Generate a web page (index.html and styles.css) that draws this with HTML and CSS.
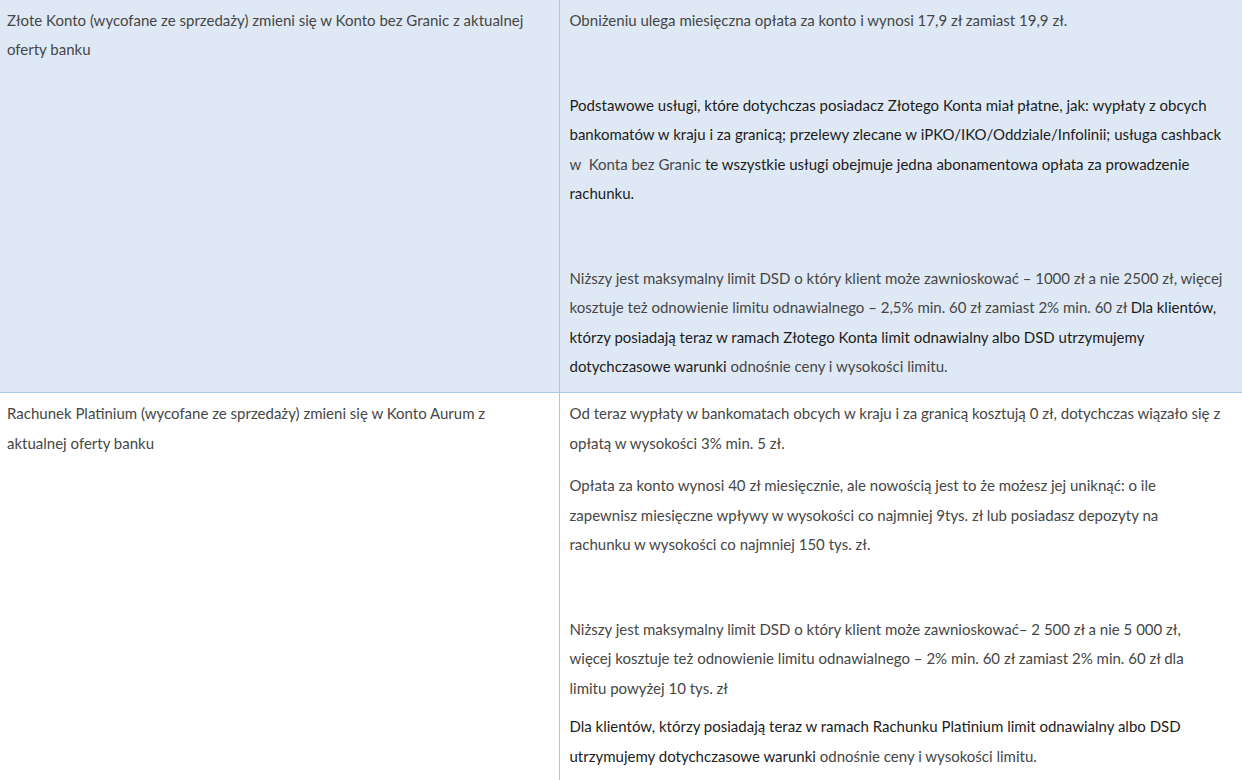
FILE: index.html
```html
<!DOCTYPE html>
<html lang="pl">
<head>
<meta charset="utf-8">
<title>Zmiany kont</title>
<link rel="stylesheet" href="styles.css">
</head>
<body>
<table class="cmp">
  <colgroup><col class="c-left"><col class="c-right"></colgroup>
  <tr class="row row-blue">
    <td class="cell cell-left"><p>Złote Konto (wycofane ze sprzedaży) zmieni się w Konto bez Granic z aktualnej oferty banku</p></td>
    <td class="cell">
      <p>Obniżeniu ulega miesięczna opłata za konto i wynosi 17,9 zł zamiast 19,9 zł.</p>
      <p>&nbsp;</p>
      <p><span class="dark">Podstawowe usługi, które dotychczas posiadacz Złotego Konta miał płatne, jak: wypłaty z obcych bankomatów w kraju i za granicą; przelewy zlecane w iPKO/IKO/Oddziale/Infolinii; usługa cashback</span> w&nbsp; Konta bez Granic <span class="dark">te wszystkie usługi obejmuje jedna abonamentowa opłata za prowadzenie rachunku.</span></p>
      <p>&nbsp;</p>
      <p>Niższy jest maksymalny limit DSD o który klient może zawnioskować – 1000 zł a nie 2500 zł, więcej kosztuje też odnowienie limitu odnawialnego – 2,5% min. 60 zł zamiast 2% min. 60 zł <span class="dark">Dla klientów, którzy posiadają teraz w ramach Złotego Konta limit odnawialny albo DSD utrzymujemy dotychczasowe warunki</span> odnośnie ceny i wysokości limitu.</p>
    </td>
  </tr>
  <tr class="row">
    <td class="cell cell-left"><p>Rachunek Platinium (wycofane ze sprzedaży) zmieni się w Konto Aurum z aktualnej oferty banku</p></td>
    <td class="cell">
      <p>Od teraz wypłaty w bankomatach obcych w kraju i za granicą kosztują 0 zł, dotychczas wiązało się z opłatą w wysokości 3% min. 5 zł.</p>
      <p>Opłata za konto wynosi 40 zł miesięcznie, ale nowością jest to że możesz jej uniknąć: o ile<br>zapewnisz miesięczne wpływy w wysokości co najmniej 9tys. zł lub posiadasz depozyty na<br>rachunku w wysokości co najmniej 150 tys. zł.</p>
      <p>&nbsp;</p>
      <p>Niższy jest maksymalny limit DSD o który klient może zawnioskować– 2 500 zł a nie 5 000 zł,<br>więcej kosztuje też odnowienie limitu odnawialnego – 2% min. 60 zł zamiast 2% min. 60 zł dla<br>limitu powyżej 10 tys. zł</p>
      <p class="tight"><span class="dark">Dla klientów, którzy posiadają teraz w ramach Rachunku Platinium limit odnawialny albo DSD utrzymujemy dotychczasowe warunki</span> odnośnie ceny i wysokości limitu.</p>
    </td>
  </tr>
</table>
</body>
</html>
```

FILE: styles.css
```css
html, body {
  margin: 0;
  padding: 0;
  background: #ffffff;
}
body {
  font-family: Lato, "Open Sans", sans-serif;
  font-size: 15px;
  line-height: 29.4px;
  color: #464646;
  overflow: hidden;
}
.cmp {
  border-collapse: collapse;
  width: 1242px;
  table-layout: fixed;
}
.c-left { width: 559px; }
.row-blue { background: #dfe9f5; }
.cell {
  vertical-align: top;
  padding: 6px 10px 0 10px;
  border-bottom: 1px solid #a9c7e7;
  border-left: 1px solid #a9c7e7;
}
.cell-left {
  padding-left: 7px;
  border-left: none;
}
.cell p {
  margin: 0 0 13px;
}
.cell p.tight {
  margin-top: -4px;
}
.cell p:last-child {
  margin-bottom: 11px;
}
.dark {
  color: #1c1c1c;
}
```
